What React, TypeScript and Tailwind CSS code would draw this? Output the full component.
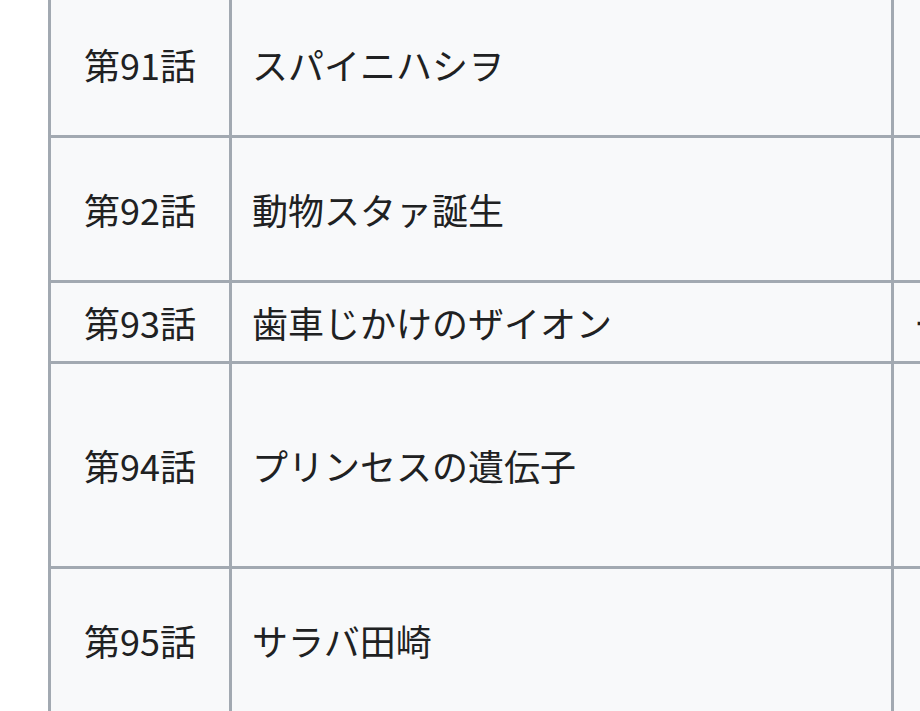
const EPISODES = [
  { no: '第91話', title: 'スパイニハシヲ', staff: '', height: 'h-[145px]' },
  { no: '第92話', title: '動物スタァ誕生', staff: '', height: 'h-[145px]' },
  { no: '第93話', title: '歯車じかけのザイオン', staff: 'ー', height: 'h-[81px]' },
  { no: '第94話', title: 'プリンセスの遺伝子', staff: '', height: 'h-[205px]' },
  { no: '第95話', title: 'サラバ田崎', staff: '', height: 'h-[145px]' },
];

export default function App() {
  return (
    <div className="w-[920px] h-[711px] overflow-hidden bg-white">
      <table
        className="mt-[-10px] ml-[48px] border-separate border-spacing-0 table-fixed w-[1143px] text-[36px] leading-[1.3] text-[#202122]"
        style={{ fontFamily: '"Noto Sans CJK JP", "Noto Sans", sans-serif' }}
      >
        <tbody>
          {EPISODES.map((ep) => (
            <tr key={ep.no} className={ep.height}>
              <td className="w-[181px] border-l-[3px] border-t-[3px] border-[#a2a9b1] bg-[#f8f9fa] p-0 text-center align-middle whitespace-nowrap">
                {ep.no}
              </td>
              <td className="w-[662px] border-l-[3px] border-t-[3px] border-[#a2a9b1] bg-[#f8f9fa] px-[20px] py-0 text-left align-middle whitespace-nowrap">
                {ep.title}
              </td>
              <td className="w-[300px] border-l-[3px] border-t-[3px] border-[#a2a9b1] bg-[#f8f9fa] px-[20px] py-0 text-left align-middle whitespace-nowrap">
                {ep.staff}
              </td>
            </tr>
          ))}
        </tbody>
      </table>
    </div>
  );
}
